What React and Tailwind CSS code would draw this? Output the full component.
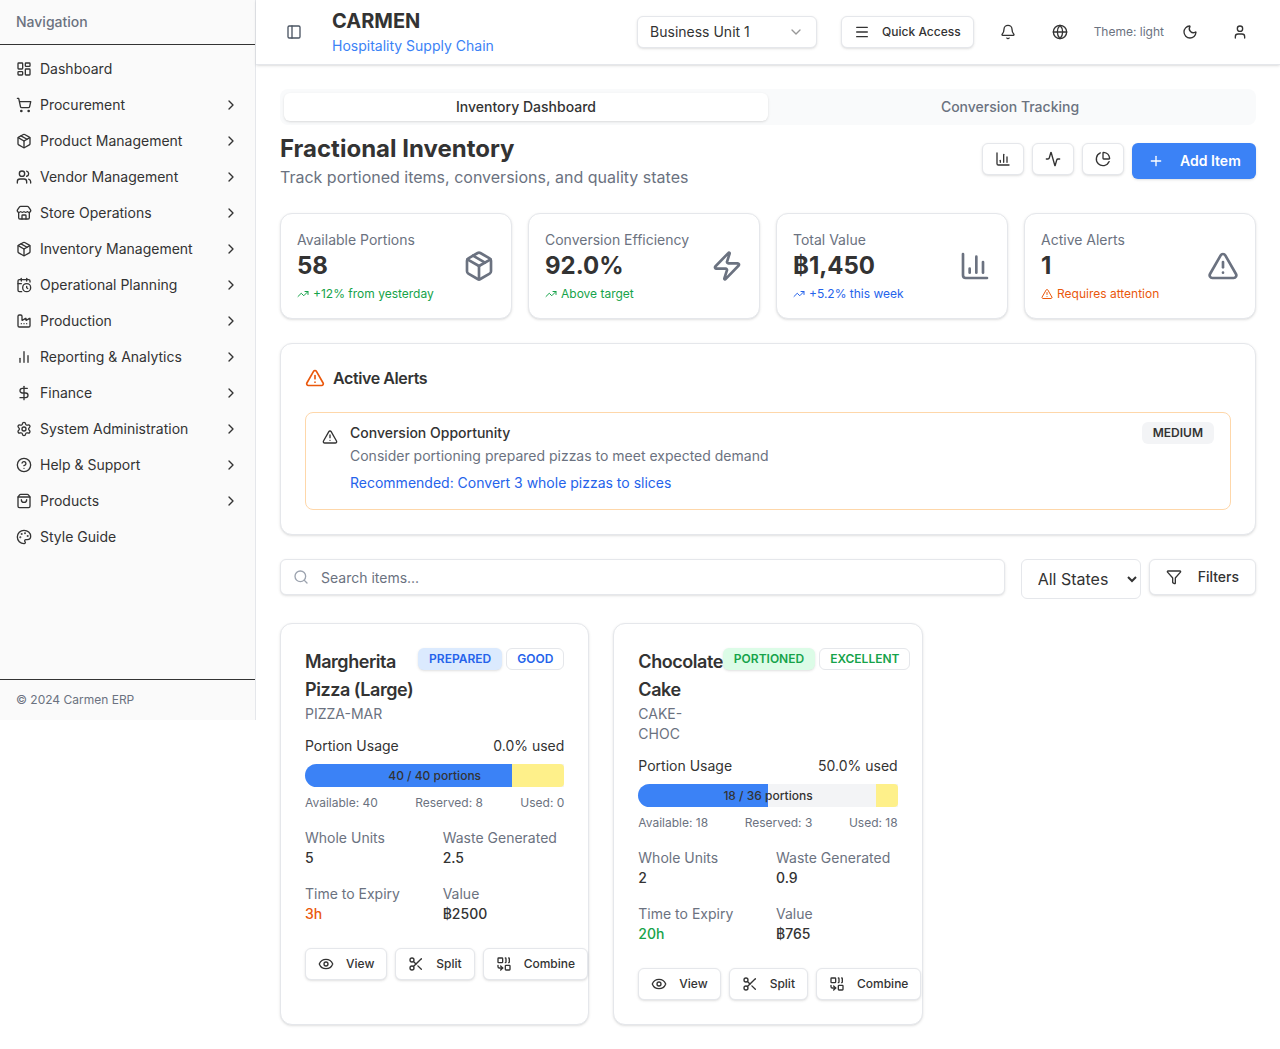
import React from 'react';
import {
  LayoutDashboard, ShoppingCart, Package, Users, Store, CalendarClock, Factory,
  DollarSign, Settings, CircleHelp, ShoppingBag, Palette, ChevronRight, PanelLeft, ChevronDown, Menu,
  Bell, Globe, Moon, User, ChartColumn, Activity, ChartPie, Plus, Zap, TriangleAlert, TrendingUp,
  Search, Funnel, Eye, Scissors, Combine,
} from 'lucide-react';

function SmallBars({ className }) {
  return (
    <svg className={className} viewBox="0 0 24 24" fill="none" stroke="currentColor" strokeWidth="2" strokeLinecap="round" strokeLinejoin="round">
      <path d="M18 20V10" />
      <path d="M12 20V4" />
      <path d="M6 20v-6" />
    </svg>
  );
}

const nav = [
  [LayoutDashboard, 'Dashboard', false],
  [ShoppingCart, 'Procurement', true],
  [Package, 'Product Management', true],
  [Users, 'Vendor Management', true],
  [Store, 'Store Operations', true],
  [Package, 'Inventory Management', true],
  [CalendarClock, 'Operational Planning', true],
  [Factory, 'Production', true],
  [SmallBars, 'Reporting & Analytics', true],
  [DollarSign, 'Finance', true],
  [Settings, 'System Administration', true],
  [CircleHelp, 'Help & Support', true],
  [ShoppingBag, 'Products', true],
  [Palette, 'Style Guide', false],
];

function Sidebar() {
  return (
    <aside className="w-[256px] h-[720px] shrink-0 flex flex-col bg-[#fafafa] border-r border-[#e5e7eb]">
      <div className="h-[45px] px-4 flex items-center border-b border-[#333] text-sm font-medium text-[#6b7280]">
        Navigation
      </div>
      <nav className="flex-1 px-2 pt-1.5">
        {nav.map(([Icon, label, more]) => (
          <div key={label} className="h-9 px-2 flex items-center gap-2 text-sm text-[#333]">
            <Icon className="w-4 h-4 shrink-0" />
            <span className="flex-1">{label}</span>
            {more && <ChevronRight className="w-4 h-4 shrink-0" />}
          </div>
        ))}
      </nav>
      <div className="h-[41px] px-4 flex items-center border-t border-[#333] text-xs text-[#6b7280]">
        © 2024 Carmen ERP
      </div>
    </aside>
  );
}

function Header() {
  return (
    <header className="h-[65px] flex items-center justify-between pl-4 pr-5 bg-white border-b border-[#e5e7eb] shadow-sm">
      <div className="flex items-center gap-4">
        <div className="w-[44px] h-9 flex items-center justify-center text-[#4b5563]">
          <PanelLeft className="w-4 h-4" />
        </div>
        <div>
          <div className="text-xl leading-6 font-bold text-[#333]">CARMEN</div>
          <div className="text-sm leading-5 mt-[3px] text-[#3b82f6]">Hospitality Supply Chain</div>
        </div>
      </div>
      <div className="flex items-center">
        <div className="w-[180px] h-8 px-3 flex items-center justify-between rounded-md border border-[#e5e7eb] shadow-sm bg-white text-sm text-[#333]">
          <span>Business Unit 1</span>
          <ChevronDown className="w-4 h-4 opacity-50" />
        </div>
        <div className="ml-6 h-8 px-3 flex items-center gap-3 rounded-md border border-[#e5e7eb] shadow-sm bg-white text-xs font-medium text-[#333]">
          <Menu className="w-4 h-4" />
          <span>Quick Access</span>
        </div>
        <div className="ml-[14px] w-10 h-8 flex items-center justify-center text-[#333]"><Bell className="w-4 h-4" /></div>
        <div className="ml-3 w-10 h-8 flex items-center justify-center text-[#333]"><Globe className="w-4 h-4" /></div>
        <span className="ml-3.5 text-xs text-[#6b7280]">Theme: light</span>
        <div className="ml-1.5 w-10 h-8 flex items-center justify-center text-[#333]"><Moon className="w-4 h-4" /></div>
        <div className="ml-2.5 w-10 h-8 flex items-center justify-center text-[#333]"><User className="w-4 h-4" /></div>
      </div>
    </header>
  );
}

function Stat({ label, value, Icon, TrendIcon, note, color }) {
  return (
    <div className="p-4 flex items-center justify-between rounded-xl border border-[#e5e7eb] bg-white shadow-sm">
      <div>
        <div className="text-sm text-[#6b7280]">{label}</div>
        <div className="text-2xl font-bold text-[#333]">{value}</div>
        <div className={`mt-1 flex items-center gap-1 text-xs ${color}`}>
          <TrendIcon className="w-3 h-3" />
          <span>{note}</span>
        </div>
      </div>
      <Icon className="w-8 h-8 text-[#6b7280]" />
    </div>
  );
}

function ActionButton({ Icon, label }) {
  return (
    <div className="h-8 px-3 shrink-0 flex items-center gap-3 rounded-md border border-[#e5e7eb] bg-white shadow-sm text-xs font-medium text-[#333]">
      <Icon className="w-4 h-4" />
      <span>{label}</span>
    </div>
  );
}

function Field({ label, value, color = 'text-[#333]' }) {
  return (
    <div>
      <div className="text-sm text-[#6b7280]">{label}</div>
      <div className={`text-sm font-medium ${color}`}>{value}</div>
    </div>
  );
}

function ItemCard({ name, code, badge, badgeClass, quality, qualityClass, used, portions, fill, reserve, available, reserved, usedCount, whole, waste, expiry, expiryClass, value }) {
  return (
    <div className="p-6 rounded-xl border border-[#e5e7eb] bg-white shadow-sm">
      <div className="flex justify-between items-start">
        <div>
          <h3 className="text-lg leading-7 font-semibold tracking-tight text-[#333]">{name}</h3>
          <p className="text-sm text-[#6b7280]">{code}</p>
        </div>
        <div className="flex gap-1 whitespace-nowrap shrink-0">
          <span className={`px-2.5 py-0.5 rounded-md border border-transparent shadow-sm text-xs font-semibold h-[22px] ${badgeClass}`}>{badge}</span>
          <span className={`px-2.5 py-0.5 rounded-md border border-[#e5e7eb] bg-white text-xs font-semibold h-[22px] ${qualityClass}`}>{quality}</span>
        </div>
      </div>
      <div className="mt-3 flex justify-between text-sm text-[#333]">
        <span>Portion Usage</span>
        <span>{used}</span>
      </div>
      <div className="relative mt-2 h-[23px] bg-[#f3f4f6] rounded-r-sm rounded-l-full">
        <div className="h-full bg-[#3b82f6] rounded-l-full" style={{ width: fill }} />
        <div className="absolute right-0 top-0 h-full bg-[#fef08a] rounded-r-sm" style={{ width: reserve }} />
        <div className="absolute inset-0 flex items-center justify-center text-xs font-medium text-[#333]">{portions}</div>
      </div>
      <div className="mt-2 flex justify-between text-xs text-[#6b7280]">
        <span>Available: {available}</span>
        <span>Reserved: {reserved}</span>
        <span>Used: {usedCount}</span>
      </div>
      <div className="mt-[17px] grid grid-cols-2 gap-x-4 gap-y-4">
        <Field label="Whole Units" value={whole} />
        <Field label="Waste Generated" value={waste} />
        <Field label="Time to Expiry" value={expiry} color={expiryClass} />
        <Field label="Value" value={value} />
      </div>
      <div className="mt-6 flex gap-2">
        <ActionButton Icon={Eye} label="View" />
        <ActionButton Icon={Scissors} label="Split" />
        <ActionButton Icon={Combine} label="Combine" />
      </div>
    </div>
  );
}

export default function App() {
  return (
    <div className="flex items-start bg-white min-h-[1049px] text-[#333]" style={{ fontFamily: 'Inter, sans-serif' }}>
      <Sidebar />
      <div className="flex-1 min-w-0">
        <Header />
        <main className="px-6 pt-6 pb-6">
          <div className="h-9 p-1 grid grid-cols-2 rounded-lg bg-[#f9fafb] text-sm font-medium">
            <div className="flex items-center justify-center rounded-md bg-white shadow-sm text-[#333]">Inventory Dashboard</div>
            <div className="flex items-center justify-center text-[#6b7280]">Conversion Tracking</div>
          </div>

          <div className="mt-2 flex items-center justify-between">
            <div>
              <h1 className="text-2xl font-bold text-[#333]">Fractional Inventory</h1>
              <p className="text-base text-[#6b7280]">Track portioned items, conversions, and quality states</p>
            </div>
            <div className="flex items-start gap-2">
              {[ChartColumn, Activity, ChartPie].map((Icon, i) => (
                <div key={i} className="w-[42px] h-8 flex items-center justify-center rounded-md border border-[#e5e7eb] bg-white shadow-sm text-[#333]">
                  <Icon className="w-4 h-4" />
                </div>
              ))}
              <div className="h-9 w-[124px] px-4 flex items-center gap-4 rounded-md bg-[#3b82f6] shadow-sm text-sm font-semibold whitespace-nowrap text-white">
                <Plus className="w-4 h-4 shrink-0" />
                <span>Add Item</span>
              </div>
            </div>
          </div>

          <div className="mt-6 grid grid-cols-4 gap-4">
            <Stat label="Available Portions" value="58" Icon={Package} TrendIcon={TrendingUp} note="+12% from yesterday" color="text-[#16a34a]" />
            <Stat label="Conversion Efficiency" value="92.0%" Icon={Zap} TrendIcon={TrendingUp} note="Above target" color="text-[#16a34a]" />
            <Stat label="Total Value" value="฿1,450" Icon={ChartColumn} TrendIcon={TrendingUp} note="+5.2% this week" color="text-[#2563eb]" />
            <Stat label="Active Alerts" value="1" Icon={TriangleAlert} TrendIcon={TriangleAlert} note="Requires attention" color="text-[#ea580c]" />
          </div>

          <section className="mt-6 px-6 pt-[22px] pb-6 rounded-xl border border-[#e5e7eb] bg-white shadow-sm">
            <div className="flex items-center gap-2 text-base font-semibold tracking-tight text-[#333]">
              <TriangleAlert className="w-5 h-5 text-[#ea580c]" />
              <span>Active Alerts</span>
            </div>
            <div className="mt-[22px] px-4 pt-[9px] pb-4 flex gap-3 rounded-lg border border-[#fed7aa] bg-white">
              <TriangleAlert className="w-4 h-4 mt-[7px] shrink-0 text-[#333]" />
              <div className="flex-1">
                <div className="flex items-center justify-between">
                  <span className="text-sm font-medium text-[#333]">Conversion Opportunity</span>
                  <span className="px-2.5 py-0.5 rounded-md border border-transparent bg-[#f3f4f6] text-xs font-semibold text-[#333]">MEDIUM</span>
                </div>
                <p className="mt-[2px] text-sm text-[#6b7280]">Consider portioning prepared pizzas to meet expected demand</p>
                <p className="mt-[7px] text-sm text-[#2563eb]">Recommended: Convert 3 whole pizzas to slices</p>
              </div>
            </div>
          </section>

          <div className="mt-6 flex items-start">
            <div className="flex-1 h-9 px-3 flex items-center gap-3 rounded-md border border-[#e5e7eb] bg-white shadow-sm">
              <Search className="w-4 h-4 shrink-0 text-[#9ca3af]" />
              <input placeholder="Search items..." className="flex-1 min-w-0 bg-transparent text-sm outline-none pt-px placeholder:text-[#6b7280]" />
            </div>
            <select className="ml-4 w-[120px] h-10 px-3 rounded-md border border-[#e5e7eb] bg-white text-base text-[#333]" defaultValue="all">
              <option value="all">All States</option>
            </select>
            <div className="ml-2 h-9 px-4 flex items-center gap-4 rounded-md border border-[#e5e7eb] bg-white shadow-sm text-sm font-medium text-[#333]">
              <Funnel className="w-4 h-4" />
              <span>Filters</span>
            </div>
          </div>

          <div className="mt-6 grid grid-cols-3 gap-6">
            <ItemCard name="Margherita Pizza (Large)" code="PIZZA-MAR" badge="PREPARED" badgeClass="bg-[#dbeafe] text-[#2563eb]" quality="GOOD" qualityClass="text-[#2563eb]"
              used="0.0% used" portions="40 / 40 portions" fill="80%" reserve="20%" available="40" reserved="8" usedCount="0"
              whole="5" waste="2.5" expiry="3h" expiryClass="text-[#ea580c]" value="฿2500" />
            <ItemCard name="Chocolate Cake" code="CAKE-CHOC" badge="PORTIONED" badgeClass="bg-[#dcfce7] text-[#16a34a]" quality="EXCELLENT" qualityClass="text-[#16a34a]"
              used="50.0% used" portions="18 / 36 portions" fill="50%" reserve="8.33%" available="18" reserved="3" usedCount="18"
              whole="2" waste="0.9" expiry="20h" expiryClass="text-[#16a34a]" value="฿765" />
          </div>
        </main>
      </div>
    </div>
  );
}
